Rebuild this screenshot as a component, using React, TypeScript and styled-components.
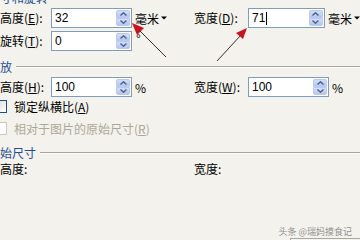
import React from 'react';
import styled, { createGlobalStyle } from 'styled-components';

const Global = createGlobalStyle`
  html, body { margin: 0; padding: 0; }
  body { width: 360px; height: 240px; overflow: hidden; background: #f3f2ec; }
`;

const Page = styled.div`
  position: relative;
  width: 360px;
  height: 240px;
  overflow: hidden;
  background: #f3f2ec;
  font-family: "Noto Sans CJK SC", "Liberation Sans", sans-serif;
  font-size: 12px;
  color: #000;
  display: flex;
  flex-direction: column;
`;

const GroupTitle = styled.div<{ $top: number }>`
  display: flex;
  align-items: center;
  height: 14px;
  line-height: 14px;
  margin-top: ${p => p.$top}px;
  margin-left: -12px;
  color: #1f4f8f;
  white-space: nowrap;
  &::after {
    content: '';
    flex: 1;
    margin-left: 4px;
    border-top: 1px solid #a6a59f;
    border-bottom: 1px solid #ffffff;
  }
`;

const Row = styled.div<{ $top: number; $h?: number }>`
  display: grid;
  grid-template-columns: 194px 166px;
  align-items: center;
  height: ${p => p.$h ?? 20}px;
  margin-top: ${p => p.$top}px;
`;

const Field = styled.div`
  display: flex;
  align-items: center;
  height: 100%;
  white-space: nowrap;
`;

const Label = styled.span<{ $w: number }>`
  width: ${p => p.$w}px;
  flex: none;
  line-height: 14px;
`;

const Box = styled.div`
  box-sizing: border-box;
  width: 81px;
  height: 20px;
  border: 1px solid #7f9db9;
  background: #fff;
  display: flex;
  align-items: stretch;
`;

const Value = styled.div`
  flex: 1;
  display: flex;
  align-items: center;
  padding-left: 3px;
  font-family: "Liberation Sans", Arial, sans-serif;
  font-size: 12px;
`;

const Caret = styled.span`
  display: inline-block;
  width: 1px;
  height: 13px;
  background: #000;
  margin-left: 1px;
`;

const Spinner = styled.div`
  width: 14px;
  margin: 1px 1px 1px 0;
  display: flex;
  flex-direction: column;
  gap: 0;
`;

const SpinHalf = styled.div<{ $up?: boolean }>`
  flex: 1;
  display: flex;
  align-items: center;
  justify-content: center;
  background: linear-gradient(#d2ddf8, #b4c6f0);
  border: 1px solid #b9c9ef;
  border-radius: ${p => (p.$up ? '2px 2px 0 0' : '0 0 2px 2px')};
`;

const Unit = styled.span<{ $top?: boolean }>`
  margin-left: 3px;
  display: flex;
  align-items: center;
  gap: 2px;
  align-self: ${p => (p.$top ? 'flex-start' : 'center')};
  font-family: "Noto Sans CJK SC", "Liberation Sans", sans-serif;
`;

const Degree = styled.span`
  margin-left: 4px;
  margin-top: 3px;
  align-self: flex-start;
  font-family: "Liberation Sans", sans-serif;
  font-size: 12px;
  line-height: 10px;
`;

const CheckRow = styled.div<{ $top: number; $disabled?: boolean }>`
  display: flex;
  align-items: center;
  gap: 7px;
  height: 14px;
  margin-top: ${p => p.$top}px;
  margin-left: -6px;
  color: ${p => (p.$disabled ? '#aca899' : '#000')};
`;

const CheckBox = styled.span<{ $disabled?: boolean }>`
  box-sizing: border-box;
  width: 13px;
  height: 13px;
  border: 1px solid ${p => (p.$disabled ? '#cac8bb' : '#1c5180')};
  background: ${p => (p.$disabled ? '#fff' : 'linear-gradient(135deg, #dcdcd7, #ffffff)')};
`;

const Overlay = styled.svg`
  position: absolute;
  left: 0;
  top: 0;
  width: 360px;
  height: 240px;
  pointer-events: none;
`;

const Watermark = styled.div`
  position: absolute;
  right: 8px;
  top: 226px;
  font-size: 9px;
  line-height: 11px;
  color: #8d8c88;
  text-shadow: 0 0 1px #fff;
  white-space: nowrap;
`;

const ButtonEdge = styled.div`
  position: absolute;
  left: 290px;
  top: 238px;
  width: 80px;
  height: 10px;
  border-top: 1px solid #a9a8a2;
  border-left: 1px solid #a9a8a2;
`;

const SpinArrow = ({ up }: { up?: boolean }) => (
  <svg width="7" height="4" viewBox="0 0 7 4">
    <polyline
      points={up ? '0.5,3.5 3.5,0.8 6.5,3.5' : '0.5,0.5 3.5,3.2 6.5,0.5'}
      fill="none"
      stroke="#4d6185"
      strokeWidth="1.4"
    />
  </svg>
);

const Spin = ({ value, caret }: { value: string; caret?: boolean }) => (
  <Box>
    <Value>
      {value}
      {caret && <Caret />}
    </Value>
    <Spinner>
      <SpinHalf $up>
        <SpinArrow up />
      </SpinHalf>
      <SpinHalf>
        <SpinArrow />
      </SpinHalf>
    </Spinner>
  </Box>
);

const DropTri = () => (
  <svg width="6" height="4" viewBox="0 0 6 4">
    <polygon points="0,0.5 6,0.5 3,3.5" fill="#000" />
  </svg>
);

export default function App() {
  return (
    <Page>
      <Global />
      <GroupTitle $top={-9}>尺寸和旋转</GroupTitle>
      <Row $top={3}>
        <Field>
          <Label $w={51}>高度(<u>E</u>):</Label>
          <Spin value="32" />
          <Unit>
            毫米
            <DropTri />
          </Unit>
        </Field>
        <Field>
          <Label $w={54}>宽度(<u>D</u>):</Label>
          <Spin value="71" caret />
          <Unit>
            毫米
            <DropTri />
          </Unit>
        </Field>
      </Row>
      <Row $top={3}>
        <Field>
          <Label $w={51}>旋转(<u>T</u>):</Label>
          <Spin value="0" />
          <Degree>°</Degree>
        </Field>
        <Field />
      </Row>
      <GroupTitle $top={9}>缩放</GroupTitle>
      <Row $top={3}>
        <Field>
          <Label $w={51}>高度(<u>H</u>):</Label>
          <Spin value="100" />
          <Unit>%</Unit>
        </Field>
        <Field>
          <Label $w={54}>宽度(<u>W</u>):</Label>
          <Spin value="100" />
          <Unit>%</Unit>
        </Field>
      </Row>
      <CheckRow $top={2}>
        <CheckBox />
        <span>锁定纵横比(<u>A</u>)</span>
      </CheckRow>
      <CheckRow $top={8} $disabled>
        <CheckBox $disabled />
        <span>相对于图片的原始尺寸(<u>R</u>)</span>
      </CheckRow>
      <GroupTitle $top={11}>原始尺寸</GroupTitle>
      <Row $top={2} $h={14}>
        <Field>
          <Label $w={51}>高度:</Label>
        </Field>
        <Field>
          <Label $w={54}>宽度:</Label>
        </Field>
      </Row>
      <Watermark>头条 @瑞妈摸食记</Watermark>
      <ButtonEdge />
      <Overlay viewBox="0 0 360 240">
        <line x1="166" y1="57" x2="138" y2="29" stroke="#3a2c2c" strokeWidth="1" />
        <polygon points="132,23 144,28 137,35" fill="#c8141e" />
        <line x1="217" y1="61" x2="241" y2="35" stroke="#3a2c2c" strokeWidth="1" />
        <polygon points="247,28 243,39 236,33" fill="#c8141e" />
      </Overlay>
    </Page>
  );
}
